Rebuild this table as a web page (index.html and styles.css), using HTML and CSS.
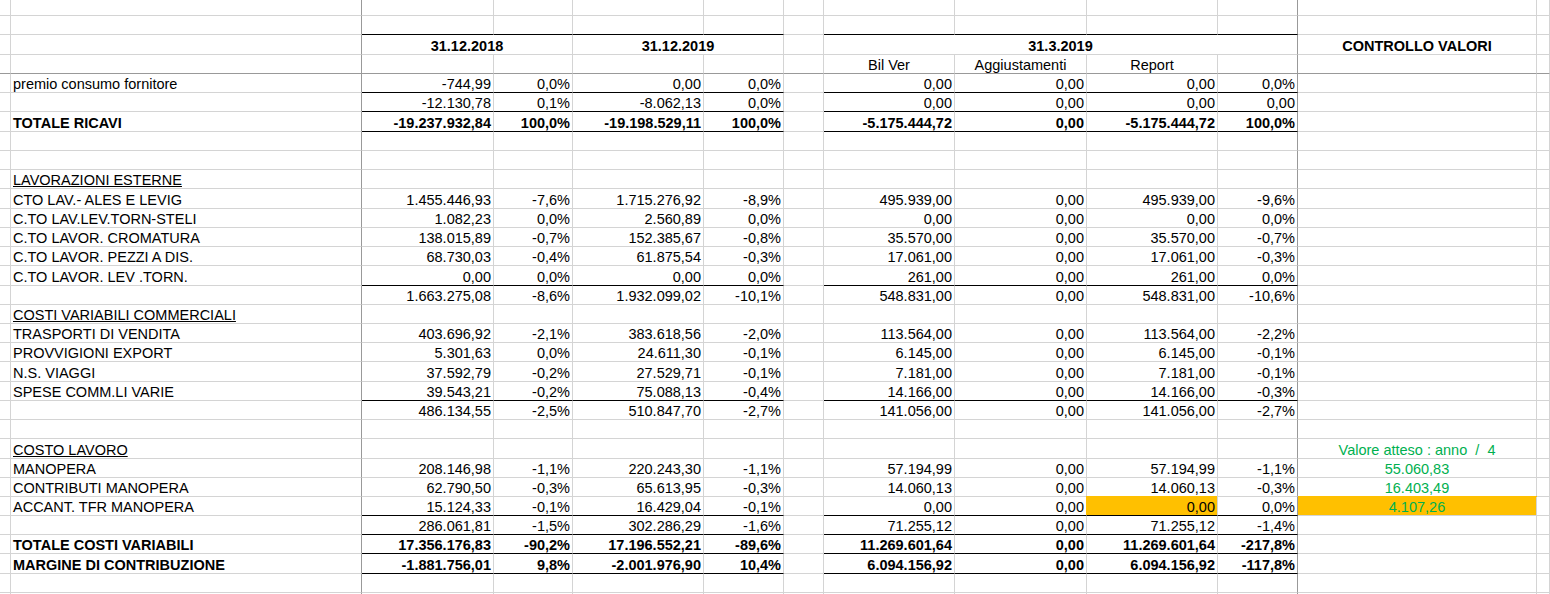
FILE: index.html
```html
<!DOCTYPE html>
<html lang="it">
<head>
<meta charset="utf-8">
<title>Conto economico</title>
<link rel="stylesheet" href="styles.css">
</head>
<body>
<div class="sheet">
<div class="row h16"><div></div><div class="fz"></div><div></div><div></div><div></div><div></div><div></div><div></div><div></div><div></div><div class="fz"></div><div></div><div></div></div>
<div class="row bk"><div></div><div class="fz"></div><div class="n"></div><div class="n"></div><div class="n"></div><div class="n"></div><div></div><div class="n"></div><div class="n"></div><div class="n"></div><div class="n fz"></div><div></div><div></div></div>
<div class="row t bold"><div></div><div class="fz"></div><div class="ct s2">31.12.2018</div><div class="ct s2">31.12.2019</div><div></div><div class="ct s4 fz">31.3.2019</div><div class="ct">CONTROLLO VALORI</div><div></div></div>
<div class="row frz"><div></div><div class="fz"></div><div></div><div></div><div></div><div></div><div></div><div class="ct">Bil Ver</div><div class="ct">Aggiustamenti</div><div class="ct">Report</div><div class="fz"></div><div></div><div></div></div>
<div class="row bk"><div></div><div class="fz">premio consumo fornitore</div><div class="n">-744,99</div><div class="n">0,0%</div><div class="n">0,00</div><div class="n">0,0%</div><div></div><div class="n">0,00</div><div class="n">0,00</div><div class="n">0,00</div><div class="n fz">0,0%</div><div></div><div></div></div>
<div class="row bk"><div></div><div class="fz"></div><div class="n">-12.130,78</div><div class="n">0,1%</div><div class="n">-8.062,13</div><div class="n">0,0%</div><div></div><div class="n">0,00</div><div class="n">0,00</div><div class="n">0,00</div><div class="n fz">0,00</div><div></div><div></div></div>
<div class="row t bk bold"><div></div><div class="fz">TOTALE RICAVI</div><div class="n">-19.237.932,84</div><div class="n">100,0%</div><div class="n">-19.198.529,11</div><div class="n">100,0%</div><div></div><div class="n">-5.175.444,72</div><div class="n">0,00</div><div class="n">-5.175.444,72</div><div class="n fz">100,0%</div><div></div><div></div></div>
<div class="row"><div></div><div class="fz"></div><div></div><div></div><div></div><div></div><div></div><div></div><div></div><div></div><div class="fz"></div><div></div><div></div></div>
<div class="row"><div></div><div class="fz"></div><div></div><div></div><div></div><div></div><div></div><div></div><div></div><div></div><div class="fz"></div><div></div><div></div></div>
<div class="row"><div></div><div class="fz"><span class="u">LAVORAZIONI ESTERNE</span></div><div></div><div></div><div></div><div></div><div></div><div></div><div></div><div></div><div class="fz"></div><div></div><div></div></div>
<div class="row t"><div></div><div class="fz">CTO LAV.- ALES E LEVIG</div><div class="n">1.455.446,93</div><div class="n">-7,6%</div><div class="n">1.715.276,92</div><div class="n">-8,9%</div><div></div><div class="n">495.939,00</div><div class="n">0,00</div><div class="n">495.939,00</div><div class="n fz">-9,6%</div><div></div><div></div></div>
<div class="row"><div></div><div class="fz">C.TO LAV.LEV.TORN-STELI</div><div class="n">1.082,23</div><div class="n">0,0%</div><div class="n">2.560,89</div><div class="n">0,0%</div><div></div><div class="n">0,00</div><div class="n">0,00</div><div class="n">0,00</div><div class="n fz">0,0%</div><div></div><div></div></div>
<div class="row"><div></div><div class="fz">C.TO LAVOR. CROMATURA</div><div class="n">138.015,89</div><div class="n">-0,7%</div><div class="n">152.385,67</div><div class="n">-0,8%</div><div></div><div class="n">35.570,00</div><div class="n">0,00</div><div class="n">35.570,00</div><div class="n fz">-0,7%</div><div></div><div></div></div>
<div class="row"><div></div><div class="fz">C.TO LAVOR. PEZZI A DIS.</div><div class="n">68.730,03</div><div class="n">-0,4%</div><div class="n">61.875,54</div><div class="n">-0,3%</div><div></div><div class="n">17.061,00</div><div class="n">0,00</div><div class="n">17.061,00</div><div class="n fz">-0,3%</div><div></div><div></div></div>
<div class="row t bk"><div></div><div class="fz">C.TO LAVOR. LEV .TORN.</div><div class="n">0,00</div><div class="n">0,0%</div><div class="n">0,00</div><div class="n">0,0%</div><div></div><div class="n">261,00</div><div class="n">0,00</div><div class="n">261,00</div><div class="n fz">0,0%</div><div></div><div></div></div>
<div class="row"><div></div><div class="fz"></div><div class="n">1.663.275,08</div><div class="n">-8,6%</div><div class="n">1.932.099,02</div><div class="n">-10,1%</div><div></div><div class="n">548.831,00</div><div class="n">0,00</div><div class="n">548.831,00</div><div class="n fz">-10,6%</div><div></div><div></div></div>
<div class="row"><div></div><div class="fz"><span class="u">COSTI VARIABILI COMMERCIALI</span></div><div></div><div></div><div></div><div></div><div></div><div></div><div></div><div></div><div class="fz"></div><div></div><div></div></div>
<div class="row"><div></div><div class="fz">TRASPORTI DI VENDITA</div><div class="n">403.696,92</div><div class="n">-2,1%</div><div class="n">383.618,56</div><div class="n">-2,0%</div><div></div><div class="n">113.564,00</div><div class="n">0,00</div><div class="n">113.564,00</div><div class="n fz">-2,2%</div><div></div><div></div></div>
<div class="row"><div></div><div class="fz">PROVVIGIONI EXPORT</div><div class="n">5.301,63</div><div class="n">0,0%</div><div class="n">24.611,30</div><div class="n">-0,1%</div><div></div><div class="n">6.145,00</div><div class="n">0,00</div><div class="n">6.145,00</div><div class="n fz">-0,1%</div><div></div><div></div></div>
<div class="row t"><div></div><div class="fz">N.S. VIAGGI</div><div class="n">37.592,79</div><div class="n">-0,2%</div><div class="n">27.529,71</div><div class="n">-0,1%</div><div></div><div class="n">7.181,00</div><div class="n">0,00</div><div class="n">7.181,00</div><div class="n fz">-0,1%</div><div></div><div></div></div>
<div class="row bk"><div></div><div class="fz">SPESE COMM.LI VARIE</div><div class="n">39.543,21</div><div class="n">-0,2%</div><div class="n">75.088,13</div><div class="n">-0,4%</div><div></div><div class="n">14.166,00</div><div class="n">0,00</div><div class="n">14.166,00</div><div class="n fz">-0,3%</div><div></div><div></div></div>
<div class="row"><div></div><div class="fz"></div><div class="n">486.134,55</div><div class="n">-2,5%</div><div class="n">510.847,70</div><div class="n">-2,7%</div><div></div><div class="n">141.056,00</div><div class="n">0,00</div><div class="n">141.056,00</div><div class="n fz">-2,7%</div><div></div><div></div></div>
<div class="row"><div></div><div class="fz"></div><div></div><div></div><div></div><div></div><div></div><div></div><div></div><div></div><div class="fz"></div><div></div><div></div></div>
<div class="row t"><div></div><div class="fz"><span class="u">COSTO LAVORO</span></div><div></div><div></div><div></div><div></div><div></div><div></div><div></div><div></div><div class="fz"></div><div class="ct g">Valore atteso : anno  /  4</div><div></div></div>
<div class="row"><div></div><div class="fz">MANOPERA</div><div class="n">208.146,98</div><div class="n">-1,1%</div><div class="n">220.243,30</div><div class="n">-1,1%</div><div></div><div class="n">57.194,99</div><div class="n">0,00</div><div class="n">57.194,99</div><div class="n fz">-1,1%</div><div class="ct g">55.060,83</div><div></div></div>
<div class="row"><div></div><div class="fz">CONTRIBUTI MANOPERA</div><div class="n">62.790,50</div><div class="n">-0,3%</div><div class="n">65.613,95</div><div class="n">-0,3%</div><div></div><div class="n">14.060,13</div><div class="n">0,00</div><div class="n">14.060,13</div><div class="n fz">-0,3%</div><div class="ct g">16.403,49</div><div></div></div>
<div class="row bk"><div></div><div class="fz">ACCANT. TFR MANOPERA</div><div class="n">15.124,33</div><div class="n">-0,1%</div><div class="n">16.429,04</div><div class="n">-0,1%</div><div></div><div class="n">0,00</div><div class="n">0,00</div><div class="n ol">0,00</div><div class="n fz">0,0%</div><div class="ct g ot">4.107,26</div><div></div></div>
<div class="row bk"><div></div><div class="fz"></div><div class="n">286.061,81</div><div class="n">-1,5%</div><div class="n">302.286,29</div><div class="n">-1,6%</div><div></div><div class="n">71.255,12</div><div class="n">0,00</div><div class="n">71.255,12</div><div class="n fz">-1,4%</div><div></div><div></div></div>
<div class="row bk bold"><div></div><div class="fz">TOTALE COSTI VARIABILI</div><div class="n">17.356.176,83</div><div class="n">-90,2%</div><div class="n">17.196.552,21</div><div class="n">-89,6%</div><div></div><div class="n">11.269.601,64</div><div class="n">0,00</div><div class="n">11.269.601,64</div><div class="n fz">-217,8%</div><div></div><div></div></div>
<div class="row t bk bold"><div></div><div class="fz">MARGINE DI CONTRIBUZIONE</div><div class="n">-1.881.756,01</div><div class="n">9,8%</div><div class="n">-2.001.976,90</div><div class="n">10,4%</div><div></div><div class="n">6.094.156,92</div><div class="n">0,00</div><div class="n">6.094.156,92</div><div class="n fz">-117,8%</div><div></div><div></div></div>
<div class="row"><div></div><div class="fz"></div><div></div><div></div><div></div><div></div><div></div><div></div><div></div><div></div><div class="fz"></div><div></div><div></div></div>
<div class="row"><div></div><div class="fz"></div><div></div><div></div><div></div><div></div><div></div><div></div><div></div><div></div><div class="fz"></div><div></div><div></div></div>
</div>
</body>
</html>
```

FILE: styles.css
```css
html, body {
  margin: 0;
  padding: 0;
  background: #ffffff;
  overflow: hidden;
}

.sheet {
  width: 1550px;
  font-family: "Liberation Sans", Arial, sans-serif;
  font-size: 14.5px;
  color: #000000;
}

.row {
  display: grid;
  grid-template-columns: 11px 351px 132px 79px 131px 80px 40px 131px 132px 131px 80px 239px 1fr;
  height: 19px;
}

.row.t { height: 20px; }
.row.h16 { height: 16px; }

.row > div {
  border-right: 1px solid #d4d4d4;
  border-bottom: 1px solid #d4d4d4;
  display: flex;
  align-items: flex-end;
  padding: 0 2px;
  line-height: 15px;
  white-space: pre;
  overflow: hidden;
}

.row > .n { justify-content: flex-end; }
.row > .ct { justify-content: center; }
.row > .s2 { grid-column: span 2; }
.row > .s4 { grid-column: span 4; }

.row > .fz { border-right-color: #999999; }
.row.frz > div { border-bottom-color: #999999; }
.row.bk > .n { border-bottom-color: #000000; }

.bold { font-weight: bold; }
.u { text-decoration: underline; }

.row > .g { color: #00b050; }

.row > .ol {
  background: #ffc000;
  box-shadow: -1px -1px 0 #ffc000;
}

.row > .ot {
  background: #ffc000;
  box-shadow: 0 -1px 0 #ffc000;
}
```
